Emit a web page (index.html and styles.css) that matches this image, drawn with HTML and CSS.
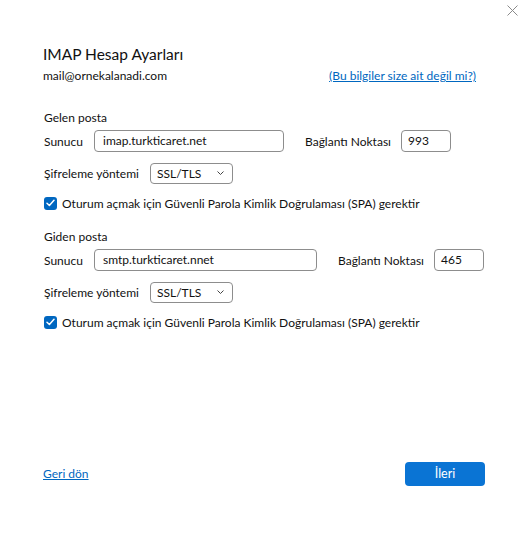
FILE: index.html
```html
<!DOCTYPE html>
<html lang="tr">
<head>
<meta charset="utf-8">
<title>IMAP Hesap Ayarları</title>
<link rel="stylesheet" href="styles.css">
</head>
<body>
<div class="dialog">
  <div class="topbar">
    <button class="close" aria-label="Kapat">
      <svg width="11" height="11" viewBox="0 0 11 11"><path d="M0.5 0.5 L10.5 10.5 M10.5 0.5 L0.5 10.5" stroke="#8a8a8a" stroke-width="1" fill="none"/></svg>
    </button>
  </div>
  <div class="content">
    <h1 class="title">IMAP Hesap Ayarları</h1>
    <div class="account-row">
      <span class="email">mail@ornekalanadi.com</span>
      <a class="link not-mine" href="#">(Bu bilgiler size ait değil mi?)</a>
    </div>

    <section class="group group-in">
      <div class="group-title">Gelen posta</div>
      <div class="row">
        <span class="label label-server">Sunucu</span>
        <div class="field server server-in">imap.turkticaret.net</div>
        <span class="label label-port">Bağlantı Noktası</span>
        <div class="field port">993</div>
      </div>
      <div class="row row-select">
        <span class="label label-enc">Şifreleme yöntemi</span>
        <div class="select">
          <span>SSL/TLS</span>
          <svg class="chev" width="7" height="4" viewBox="0 0 7 4"><path d="M0.5 0.5 L3.5 3.5 L6.5 0.5" stroke="#444" stroke-width="1" fill="none"/></svg>
        </div>
      </div>
      <div class="check-row">
        <span class="checkbox">
          <svg width="9" height="8" viewBox="0 0 9 8"><path d="M1 4.2 L3.4 6.5 L8 1.3" stroke="#fff" stroke-width="1.5" fill="none" stroke-linecap="round" stroke-linejoin="round"/></svg>
        </span>
        <span class="check-label">Oturum açmak için Güvenli Parola Kimlik Doğrulaması (SPA) gerektir</span>
      </div>
    </section>

    <section class="group group-out">
      <div class="group-title">Giden posta</div>
      <div class="row">
        <span class="label label-server">Sunucu</span>
        <div class="field server server-out">smtp.turkticaret.nnet</div>
        <span class="label label-port">Bağlantı Noktası</span>
        <div class="field port">465</div>
      </div>
      <div class="row row-select">
        <span class="label label-enc">Şifreleme yöntemi</span>
        <div class="select">
          <span>SSL/TLS</span>
          <svg class="chev" width="7" height="4" viewBox="0 0 7 4"><path d="M0.5 0.5 L3.5 3.5 L6.5 0.5" stroke="#444" stroke-width="1" fill="none"/></svg>
        </div>
      </div>
      <div class="check-row">
        <span class="checkbox">
          <svg width="9" height="8" viewBox="0 0 9 8"><path d="M1 4.2 L3.4 6.5 L8 1.3" stroke="#fff" stroke-width="1.5" fill="none" stroke-linecap="round" stroke-linejoin="round"/></svg>
        </span>
        <span class="check-label">Oturum açmak için Güvenli Parola Kimlik Doğrulaması (SPA) gerektir</span>
      </div>
    </section>
  </div>
  <div class="footer">
    <a class="link back" href="#">Geri dön</a>
    <button class="primary">İleri</button>
  </div>
</div>
</body>
</html>
```

FILE: styles.css
```css
* { box-sizing: border-box; }
html, body { margin: 0; padding: 0; background: #ffffff; }
body {
  font-family: "Lato", "Noto Sans", sans-serif;
  font-size: 12px;
  color: #111111;
}
.dialog {
  height: 544px;
  display: flex;
  flex-direction: column;
}
.topbar {
  height: 22px;
  display: flex;
  justify-content: flex-end;
  padding-right: 10px;
}
.close {
  margin-top: 5px;
  width: 11px;
  height: 11px;
  padding: 0;
  border: 0;
  background: none;
  display: flex;
}
.content {
  padding: 0 43px;
}
.title {
  margin: 21px 0 0;
  font-size: 15.5px;
  font-weight: 400;
  line-height: 23px;
  color: #111111;
}
.account-row {
  display: flex;
  justify-content: space-between;
  align-items: center;
  height: 18px;
  margin-top: 0;
  font-size: 12px;
}
.link {
  color: #0067c0;
  text-decoration: underline;
  font-size: 12px;
}
.not-mine { margin-right: 9px; }
.group-in { margin-top: 26px; }
.group-out { margin-top: 18px; }
.group-title {
  line-height: 16px;
  height: 16px;
  padding-left: 1px;
}
.row {
  display: flex;
  align-items: center;
  height: 22px;
  margin-top: 4px;
  padding-left: 1px;
}
.row-select {
  height: 21px;
  margin-top: 11px;
}
.label { flex: none; }
.label-server { width: 50px; }
.label-enc { width: 106px; }
.label-port {
  width: 96px;
  margin-left: 21px;
}
.field {
  height: 22px;
  border: 1px solid #8d8d8d;
  border-radius: 4px;
  display: flex;
  align-items: center;
  padding: 0 7px 2px 8px;
  color: #111111;
}
.server-in { width: 190px; }
.server-out { width: 223px; }
.port { width: 50px; padding-left: 6px; }
.select {
  width: 83px;
  height: 21px;
  border: 1px solid #8d8d8d;
  border-radius: 4px;
  display: flex;
  align-items: center;
  justify-content: space-between;
  padding: 0 8px 1px 6px;
}
.chev { flex: none; }
.check-row {
  display: flex;
  align-items: center;
  height: 16px;
  margin-top: 11px;
  padding-left: 1px;
  gap: 5px;
}
.checkbox {
  width: 13px;
  height: 13px;
  border-radius: 3px;
  background: #0067c0;
  display: flex;
  align-items: center;
  justify-content: center;
  flex: none;
}
.footer {
  margin-top: auto;
  padding: 0 43px 58px;
  display: flex;
  justify-content: space-between;
  align-items: center;
}
.back { margin-top: -2px; }
.primary {
  width: 80px;
  height: 24px;
  border: 0;
  border-radius: 4px;
  background: #0a74d4;
  color: #ffffff;
  font-family: "Lato", "Noto Sans", sans-serif;
  font-size: 12.5px;
  padding: 0 0 1px;
}
```
